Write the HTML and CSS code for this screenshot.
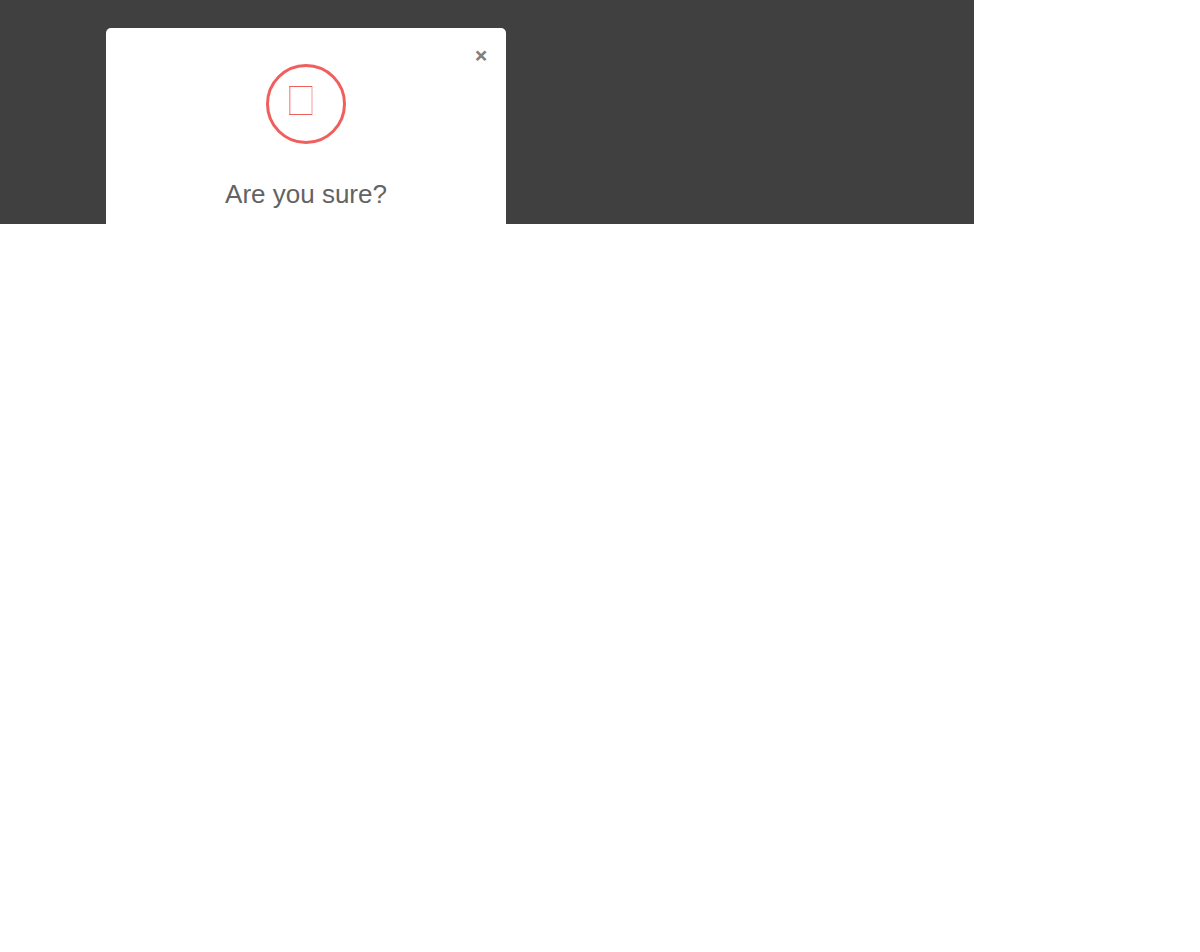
FILE: index.html
```html
<!DOCTYPE html>
<html lang="en">
<head>
  <meta charset="UTF-8">
  <title>Delete confirmation</title>
  <link rel="stylesheet" href="styles.css">
</head>
<body>

  <div class="overlay">
    <div class="modal-confirm" role="dialog" aria-labelledby="modal-title">
      <button type="button" class="close" aria-label="Close">&times;</button>
      <div class="icon-box">
        <svg width="24" height="29" viewBox="0 0 24 29" aria-hidden="true">
          <path d="M0 0.5H23M0 28.5H23"></path>
          <path class="side" d="M0.5 1V28"></path>
          <path class="side-soft" d="M1.5 1V28M22.5 0V29M23.5 0V29"></path>
        </svg>
      </div>
      <h4 id="modal-title" class="modal-title">Are you sure?</h4>
    </div>
  </div>

</body>
</html>
```
FILE: styles.css
```css
* {
  box-sizing: border-box;
}
body {
  margin: 0;
  background: #fff;
  font-family: "Liberation Sans", Arial, sans-serif;
  color: #636363;
}
.overlay {
  width: calc(100% - 226px);
  padding: 28px 0 0 106px;
  background: #404040;
}
.modal-confirm {
  position: relative;
  max-width: 400px;
  padding: 36px 20px 12px;
  background: #fff;
  border-radius: 5px 5px 0 0;
  text-align: center;
}
.close {
  position: absolute;
  top: 16px;
  right: 18px;
  padding: 0;
  border: 0;
  background: none;
  font-family: "Open Sans", sans-serif;
  font-size: 24px;
  font-weight: 700;
  line-height: 21px;
  color: #808080;
  cursor: pointer;
}
.icon-box {
  display: flex;
  justify-content: center;
  width: 80px;
  height: 80px;
  margin: 0 auto;
  padding: 19px 10px 0 0;
  border: 3px solid #f15e5e;
  border-radius: 50%;
}
.icon-box svg {
  fill: none;
  stroke: #f15e5e;
}
.side {
  stroke-opacity: 0.6;
}
.side-soft {
  stroke-opacity: 0.3;
}
.modal-title {
  margin: 32px 0 0;
  font-size: 26px;
  font-weight: 400;
  line-height: 36px;
}
```
